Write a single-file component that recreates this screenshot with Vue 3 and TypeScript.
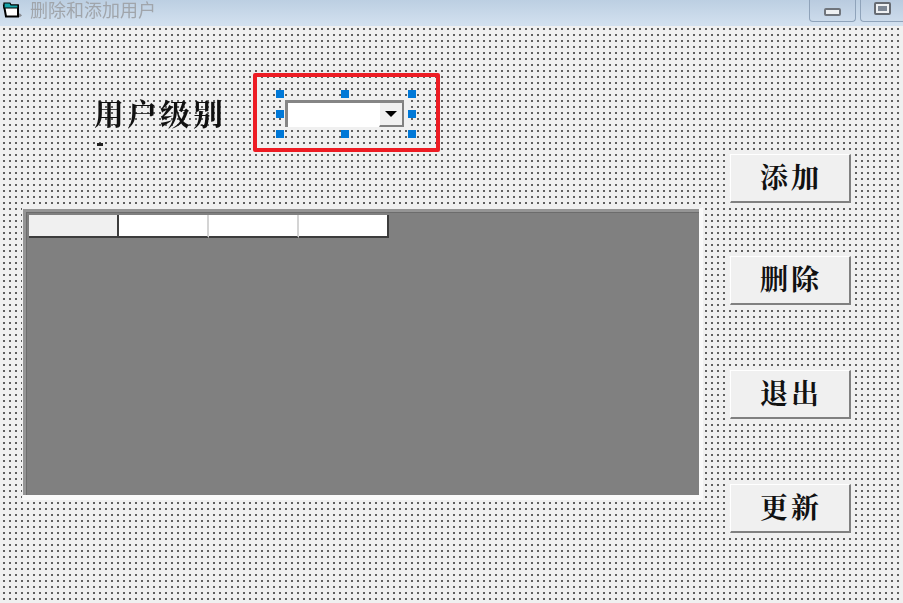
<script setup lang="ts">
const headers = ['', '', '', '']
const actions = [
  { label: '添加', key: 'add' },
  { label: '删除', key: 'remove' },
  { label: '退出', key: 'quit' },
  { label: '更新', key: 'refresh' },
]
const handles = ['tl', 'tc', 'tr', 'ml', 'mr', 'bl', 'bc', 'br']
</script>

<template>
  <div class="window">
    <header class="titlebar">
      <svg class="app-icon" width="24" height="20" viewBox="0 0 24 20">
        <path d="M10 17h10l2-1.5-2-2H10z" fill="#85898f" />
        <path d="M4 5.5h14v11H6z" fill="#fff" stroke="#000" stroke-width="2" />
        <path d="M4 3h6l1 2h7v3H4z" fill="#16a5aa" stroke="#000" stroke-width="1.2" />
      </svg>
      <span class="title">删除和添加用户</span>
      <div class="win-btn minimize"><i></i></div>
      <div class="win-btn maximize"><i></i></div>
    </header>

    <main class="form">
      <div class="left">
        <div class="top-row">
          <div class="label-box">
            <span class="label">用户级别</span>
            <span class="label-tail"></span>
          </div>
          <div class="highlight">
            <div class="combo">
              <div class="combo-input"></div>
              <div class="combo-btn"><b></b></div>
              <span v-for="h in handles" :key="h" class="handle" :class="h"></span>
            </div>
          </div>
        </div>

        <div class="grid-frame">
          <div class="grid-inner">
            <div class="grid-head">
              <div v-for="(h, i) in headers" :key="i" class="cell" :class="{ fixed: i === 0 }">{{ h }}</div>
            </div>
          </div>
        </div>
      </div>

      <div class="actions">
        <button v-for="a in actions" :key="a.key" class="action" :class="a.key">{{ a.label }}</button>
      </div>
    </main>
  </div>
</template>

<style>
html,
body {
  margin: 0;
  background: #f0f0f0;
}
</style>

<style scoped>
.window {
  width: 903px;
  height: 603px;
  display: flex;
  flex-direction: column;
  overflow: hidden;
  font-family: "Noto Serif CJK SC", "Noto Sans CJK SC", serif;
}
.titlebar {
  height: 26px;
  flex: none;
  display: flex;
  align-items: flex-start;
  background: linear-gradient(#bccfe2, #d3e1ef);
}
.app-icon {
  flex: none;
}
.title {
  margin: 1px 0 0 6px;
  font-family: "Liberation Sans", "Noto Sans CJK SC", sans-serif;
  font-size: 18px;
  line-height: 21px;
  color: #a0a5ab;
  filter: blur(0.5px);
}
.win-btn {
  flex: none;
  height: 22px;
  display: flex;
  justify-content: center;
  box-sizing: border-box;
  border: 1px solid #8fa3ba;
  border-top: 0;
  border-radius: 0 0 4px 4px;
  background: linear-gradient(#b9cbdf, #ccdbeb);
}
.minimize {
  width: 47px;
  margin-left: auto;
}
.minimize i {
  width: 17px;
  height: 8px;
  margin-top: 8px;
  box-sizing: border-box;
  border: 2px solid #70757c;
  border-radius: 2px;
  background: #eef0f2;
}
.maximize {
  width: 43px;
  margin-left: 4px;
  border-right: 0;
  border-radius: 0 0 0 4px;
}
.maximize i {
  width: 17px;
  height: 13px;
  margin-top: 2px;
  box-sizing: border-box;
  border: 2px solid #666b72;
  border-radius: 2px;
  background: #eef0f2;
  box-shadow: inset 0 0 0 2px #eef0f2, inset 0 0 0 7px #7d8794;
}

.form {
  flex: 1;
  display: flex;
  padding-left: 22px;
  background-color: #f0f0f0;
  background-image: radial-gradient(circle at 4px 3px, #606060 0.8px, rgba(96, 96, 96, 0) 1.4px);
  background-size: 6px 6px;
}
.left {
  width: 681px;
  flex: none;
}
.top-row {
  display: flex;
  align-items: flex-start;
  height: 181px;
  padding-top: 47px;
  box-sizing: border-box;
}
.label-box {
  width: 132px;
  margin: 21px 27px 0 72px;
  display: flex;
  flex-direction: column;
}
.label {
  font-size: 30px;
  font-weight: 700;
  line-height: 36px;
  letter-spacing: 3px;
  color: #111;
  white-space: nowrap;
  filter: blur(0.3px);
}
.label-tail {
  width: 6px;
  height: 3px;
  margin: 13px 0 0 3px;
  background: #222;
}
.highlight {
  width: 187px;
  height: 79px;
  box-sizing: border-box;
  border: 4px solid #ed1c24;
  border-radius: 2px;
  padding: 23px 0 0 28px;
}
.combo {
  position: relative;
  width: 119px;
  height: 27px;
  display: flex;
  box-sizing: border-box;
  border-top: 3px solid #858585;
  border-left: 3px solid #858585;
  outline: 3px solid #f0f0f0;
}
.combo-input {
  flex: 1;
  background: #fff;
}
.combo-btn {
  width: 25px;
  box-sizing: border-box;
  display: flex;
  align-items: center;
  justify-content: center;
  background: #f0f0f0;
  border-right: 2px solid #808080;
  border-bottom: 2px solid #808080;
  border-left: 1px solid #fff;
}
.combo-btn b {
  width: 0;
  height: 0;
  border-left: 6px solid transparent;
  border-right: 6px solid transparent;
  border-top: 6px solid #000;
}
.handle {
  position: absolute;
  width: 8px;
  height: 8px;
  background: #0078d7;
}
.tl, .tc, .tr { top: -13px; }
.ml, .mr { top: 7px; }
.bl, .bc, .br { top: 27px; }
.tl, .ml, .bl { left: -12px; }
.tc, .bc { left: 53px; }
.tr, .mr, .br { left: 120px; }

.grid-frame {
  width: 681px;
  height: 293px;
  box-sizing: border-box;
  background: #f0f0f0;
  border-right: 4px solid #fafafa;
  border-bottom: 5px solid #fafafa;
  border-top: 2px solid #f0f0f0;
  border-left: 1px solid #f0f0f0;
}
.grid-inner {
  height: 100%;
  box-sizing: border-box;
  background: #808080;
  padding: 3px 0 0 3px;
  border-top: 3px solid #959595;
  border-left: 3px solid #959595;
  box-shadow: inset 1px 1px 0 #6c6c6c;
}
.grid-head {
  display: flex;
}
.cell {
  width: 90px;
  height: 23px;
  box-sizing: border-box;
  background: #fff;
  border-right: 2px solid #d4d4d4;
  border-bottom: 2px solid #3c3c3c;
}
.cell.fixed {
  background: #f0f0f0;
  border-right: 2px solid #3c3c3c;
}
.cell:last-child {
  border-right: 2px solid #3c3c3c;
}

.actions {
  width: 121px;
  margin-left: 27px;
  padding-top: 128px;
  display: flex;
  flex-direction: column;
  flex: none;
}
.action {
  width: 121px;
  height: 49px;
  padding: 0 0 4px 2px;
  box-sizing: border-box;
  background: #f0f0f0;
  border: 0;
  border-top: 1px solid #fff;
  border-left: 1px solid #fff;
  border-right: 2px solid #808080;
  border-bottom: 2px solid #808080;
  font-family: inherit;
  font-size: 28px;
  font-weight: 700;
  letter-spacing: 3px;
  color: #111;
  box-shadow: 0 0 0 2px #f0f0f0;
}
.remove { margin-top: 53px; }
.quit,
.refresh { margin-top: 65px; }
</style>
